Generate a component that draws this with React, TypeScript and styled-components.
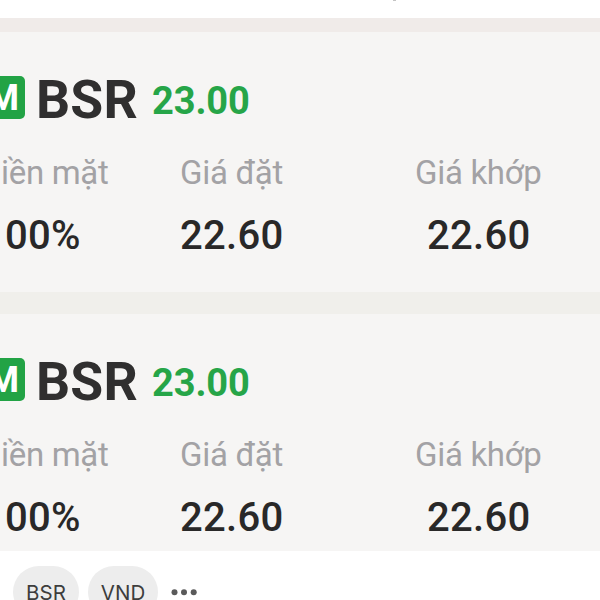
import React from "react";
import styled, { createGlobalStyle } from "styled-components";

const GlobalStyle = createGlobalStyle`
  * { box-sizing: border-box; }
  html, body { margin: 0; padding: 0; overflow: hidden; }
  body { background: #fff; font-family: Roboto, "Liberation Sans", sans-serif; }
`;

const Page = styled.main`
  width: 600px;
  height: 600px;
  overflow: hidden;
  display: flex;
  flex-direction: column;
  background: #fff;
`;

const TopBar = styled.header`
  flex: none;
  height: 18px;
  padding-left: 393px;
`;

const Speck = styled.div`
  width: 3px;
  height: 1px;
  background: #c4c4c4;
`;

const Band = styled.div<{ $size: number; $color: string }>`
  flex: none;
  height: ${(p) => p.$size}px;
  background: ${(p) => p.$color};
`;

const Card = styled.section<{ $height: number }>`
  flex: none;
  height: ${(p) => p.$height}px;
  padding-top: 38px;
  overflow: hidden;
  background: #f6f5f4;
`;

const Title = styled.div`
  display: flex;
  height: 60px;
  white-space: nowrap;
`;

const Badge = styled.span`
  flex: none;
  display: flex;
  justify-content: flex-end;
  width: 35px;
  height: 43px;
  margin: 6px 0 0 -10px;
  padding-right: 6px;
  border-radius: 5px;
  background: #22a345;
  color: #fff;
  font-size: 36px;
  font-weight: 700;
  line-height: 45px;
`;

const Ticker = styled.span`
  flex: none;
  width: 117px;
  padding-left: 11px;
  color: #302f2f;
  font-size: 53.5px;
  font-weight: 700;
  line-height: 60px;
  letter-spacing: 0.2px;
`;

const Price = styled.span`
  padding-left: 10px;
  color: #26a548;
  font-size: 38px;
  font-weight: 700;
  line-height: 62px;
  letter-spacing: -0.1px;
`;

const Columns = styled.div`
  display: grid;
  grid-template-columns: 180px 234px 186px;
  margin-top: 23px;
`;

const Field = styled.div<{ $shift: number; $indent: number }>`
  display: flex;
  flex-direction: column;
  gap: 19px;
  padding-left: ${(p) => p.$shift}px;
  white-space: nowrap;

  & > :last-child { padding-left: ${(p) => p.$indent}px; }
`;

const Label = styled.span`
  color: #a3a2a5;
  font-size: 33px;
  line-height: 40px;
  letter-spacing: -0.3px;
`;

const Value = styled.span`
  color: #292828;
  font-size: 40px;
  font-weight: 500;
  line-height: 48px;
  letter-spacing: 0.3px;
`;

const Chips = styled.footer`
  display: flex;
  align-items: flex-start;
  padding: 15px 0 0 13px;
`;

const Chip = styled.span<{ $width: number }>`
  flex: none;
  width: ${(p) => p.$width}px;
  height: 52px;
  margin-right: 9px;
  border-radius: 26px;
  background: #ededed;
  color: #3d3d3d;
  font-family: Inter, sans-serif;
  font-size: 20.5px;
  line-height: 54px;
  text-align: center;
`;

const More = styled.svg`
  margin: 22px 0 0 4px;
`;

const columns = [
  { label: "iền mặt", value: "00%", shift: 1, indent: 4 },
  { label: "Giá đặt", value: "22.60", shift: 0, indent: 0 },
  { label: "Giá khớp", value: "22.60", shift: 1, indent: 12 },
];

function Order({ height }: { height: number }) {
  return (
    <Card $height={height}>
      <Title>
        <Badge>M</Badge>
        <Ticker>BSR</Ticker>
        <Price>23.00</Price>
      </Title>
      <Columns>
        {columns.map((c) => (
          <Field key={c.label} $shift={c.shift} $indent={c.indent}>
            <Label>{c.label}</Label>
            <Value>{c.value}</Value>
          </Field>
        ))}
      </Columns>
    </Card>
  );
}

export default function App() {
  return (
    <Page>
      <GlobalStyle />
      <TopBar><Speck /></TopBar>
      <Band $size={14} $color="#f0ebe9" />
      <Order height={260} />
      <Band $size={22} $color="#f0efeb" />
      <Order height={237} />
      <Chips>
        <Chip $width={66}>BSR</Chip>
        <Chip $width={70}>VND</Chip>
        <More width="28" height="8" viewBox="0 0 28 8" fill="#5a5a5a">
          <circle cx="3.5" cy="4.3" r="3" />
          <circle cx="13" cy="4.3" r="3" />
          <circle cx="22.7" cy="4.3" r="3" />
        </More>
      </Chips>
    </Page>
  );
}
